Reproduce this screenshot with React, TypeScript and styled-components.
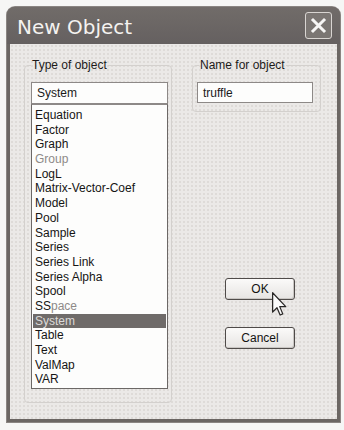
import styled, { createGlobalStyle } from "styled-components";

const GlobalStyle = createGlobalStyle`
  html, body {
    margin: 0;
    padding: 0;
    background: #f6f6f5;
    font-family: "Liberation Sans", Arial, sans-serif;
  }
`;

const Page = styled.div`
  width: 344px;
  height: 430px;
  padding: 7px 0 0 7px;
  box-sizing: border-box;
`;

const Window = styled.div`
  width: 333px;
  height: 415px;
  display: flex;
  flex-direction: column;
  background: #6b6663;
  border-radius: 8px 8px 0 0;
  box-shadow: 0 0 0 1px #8a8582;
`;

const TitleBar = styled.div`
  height: 37px;
  display: flex;
  align-items: center;
  justify-content: space-between;
  padding: 3px 8px 0 10px;
  box-sizing: border-box;
  background: linear-gradient(#716c69, #656060);
  border-radius: 8px 8px 0 0;
`;

const Title = styled.span`
  font-family: "DejaVu Sans", Verdana, sans-serif;
  font-size: 20px;
  color: #f4f2f0;
`;

const CloseButton = styled.div`
  width: 27px;
  height: 27px;
  margin-top: -3px;
  box-sizing: border-box;
  border: 1px solid #d9d5d2;
  border-radius: 3px;
  background: #7b7673;
  display: flex;
  align-items: center;
  justify-content: center;
`;

const Body = styled.div`
  flex: 1;
  margin: 0 3px 3px 3px;
  background-color: #ebe9e7;
  background-image: radial-gradient(#dedbd8 0.9px, transparent 1.1px);
  background-size: 4px 4px;
  display: flex;
  align-items: flex-start;
  padding: 14px 0 0 14px;
  gap: 20px;
`;

const Group = styled.fieldset<{ $w: number; $pl: number; $pb: number }>`
  margin: 0;
  width: ${(p) => p.$w}px;
  box-sizing: border-box;
  min-width: 0;
  border: 1px solid #d3d0cd;
  border-radius: 4px;
  padding: 10px 0 ${(p) => p.$pb}px ${(p) => p.$pl}px;
`;

const Legend = styled.legend<{ $ml: number }>`
  font-size: 12px;
  line-height: 14px;
  color: #1d1b1a;
  padding: 0 1px;
  margin-left: ${(p) => p.$ml}px;
`;

const Field = styled.div<{ $w: number; $h: number }>`
  width: ${(p) => p.$w}px;
  height: ${(p) => p.$h}px;
  box-sizing: border-box;
  border: 1px solid #8d8987;
  background: #fdfdfc;
  font-size: 12px;
  color: #1a1a1a;
  display: flex;
  align-items: center;
  padding-left: 5px;
`;

const List = styled.div`
  width: 137px;
  box-sizing: border-box;
  border: 1px solid #6c6866;
  border-top-color: #8d8987;
  background: #fdfdfc;
  padding: 3px 1px 1px 1px;
`;

const Item = styled.div<{ $selected?: boolean; $dim?: boolean }>`
  font-size: 12px;
  line-height: 14.7px;
  height: 14.7px;
  padding-left: 2px;
  color: ${(p) => (p.$selected ? "#dcdad8" : p.$dim ? "#8e8a88" : "#161514")};
  background: ${(p) => (p.$selected ? "#6f6b69" : "transparent")};
  white-space: nowrap;
`;

const Faded = styled.span`
  color: #8e8a88;
`;

const RightColumn = styled.div`
  display: flex;
  flex-direction: column;
`;

const Buttons = styled.div`
  display: flex;
  flex-direction: column;
  gap: 27px;
  margin: 166px 0 0 33px;
`;

const ButtonWrap = styled.div`
  position: relative;
`;

const Button = styled.div`
  width: 70px;
  height: 22px;
  box-sizing: border-box;
  border: 1px solid #4f4b49;
  border-radius: 3px;
  background: linear-gradient(#fbfaf9, #e6e4e2);
  box-shadow: inset -1px -1px 0 #c9c6c3;
  font-size: 12px;
  color: #141312;
  display: flex;
  align-items: center;
  justify-content: center;
`;

const Pointer = styled.svg`
  position: absolute;
  left: 47px;
  top: 14px;
`;

const items = [
  "Equation",
  "Factor",
  "Graph",
  "Group",
  "LogL",
  "Matrix-Vector-Coef",
  "Model",
  "Pool",
  "Sample",
  "Series",
  "Series Link",
  "Series Alpha",
  "Spool",
  "SSpace",
  "System",
  "Table",
  "Text",
  "ValMap",
  "VAR",
];

export default function App() {
  return (
    <Page>
      <GlobalStyle />
      <Window>
        <TitleBar>
          <Title>New Object</Title>
          <CloseButton>
            <svg width="17" height="17" viewBox="0 0 17 17">
              <path d="M3 3 L14 14 M14 3 L3 14" stroke="#f7f6f5" strokeWidth="3" strokeLinecap="square" />
            </svg>
          </CloseButton>
        </TitleBar>
        <Body>
          <Group $w={148} $pl={6} $pb={13}>
            <Legend $ml={0}>Type of object</Legend>
            <Field $w={137} $h={22}>System</Field>
            <List>
              {items.map((it) =>
                it === "SSpace" ? (
                  <Item key={it}>
                    SS<Faded>pace</Faded>
                  </Item>
                ) : (
                  <Item key={it} $selected={it === "System"} $dim={it === "Group"}>
                    {it}
                  </Item>
                )
              )}
            </List>
          </Group>
          <RightColumn>
            <Group $w={129} $pl={4} $pb={8}>
              <Legend $ml={2}>Name for object</Legend>
              <Field $w={116} $h={21}>truffle</Field>
            </Group>
            <Buttons>
              <ButtonWrap>
                <Button>OK</Button>
                <Pointer width="15" height="24" viewBox="0 0 12 19">
                  <path
                    d="M0.5 0.5 L0.5 16 L4 12.5 L6.5 18.3 L8.6 17.4 L6.2 11.6 L11 11.6 Z"
                    fill="#fbfbfb"
                    stroke="#2a2827"
                    strokeWidth="1"
                    strokeLinejoin="round"
                  />
                </Pointer>
              </ButtonWrap>
              <Button>Cancel</Button>
            </Buttons>
          </RightColumn>
        </Body>
      </Window>
    </Page>
  );
}
